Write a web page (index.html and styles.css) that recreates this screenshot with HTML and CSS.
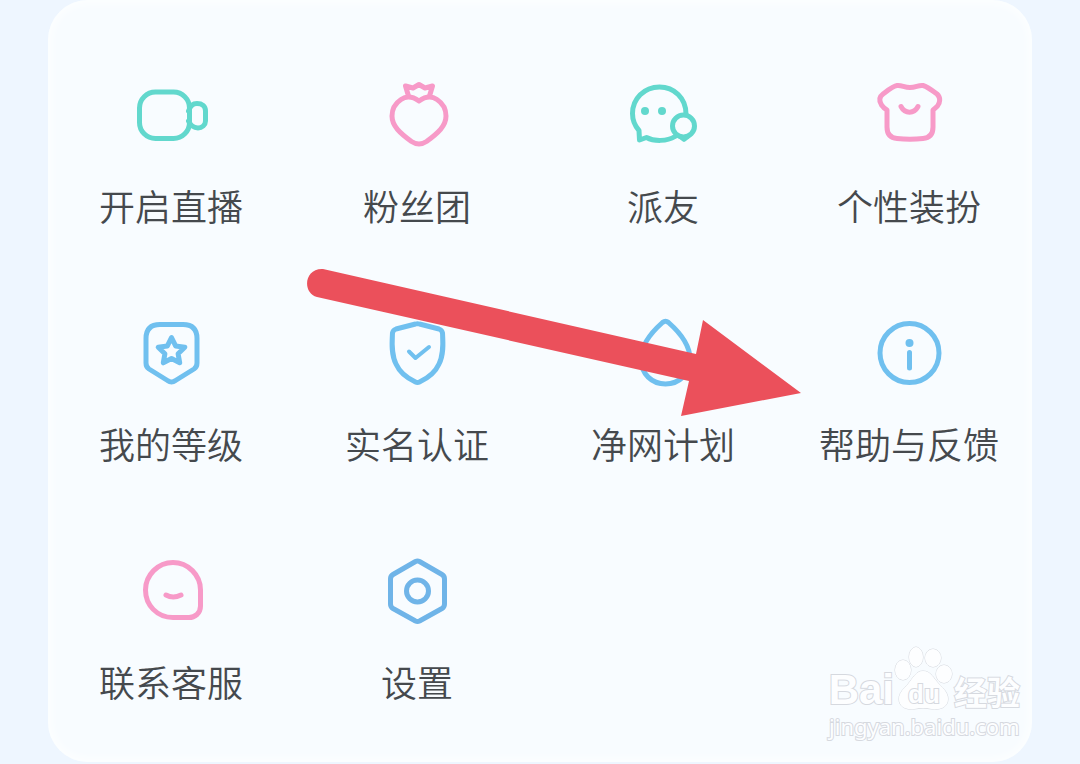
FILE: index.html
```html
<!DOCTYPE html>
<html lang="zh-CN">

<head>
    <meta charset="UTF-8">
    <meta name="viewport" content="width=device-width, initial-scale=1.0">
    <title>更多服务</title>
    <link rel="stylesheet" href="styles.css">
</head>

<body>
    <main class="panel">
        <nav class="menu">
            <a class="item green" href="#">
                <svg class="icon" viewBox="0 0 80 80" aria-hidden="true">
                    <rect x="8.500" y="18" width="50" height="46.500" rx="16" />
                    <path d="M57.500 37C59 32 62 29.500 66 29.500C71 29.500 74.500 32 74.500 37V47C74.500 51 71 54 67 54C63 54 59 51 57.500 47" />
                </svg>
                <span>开启直播</span>
            </a>
            <a class="item pink" href="#">
                <svg class="icon" viewBox="0 0 80 80" aria-hidden="true">
                    <path d="M42 27C35 22 29 22 24 25.500C18 29.500 15 35 15 42C15 52 23 59 34.500 67.500Q42 72.500 49.500 67.500C61 59 69 52 69 42C69 35 66 29.500 60 25.500C55 22 49 22 42 27Z" />
                    <path d="M31.500 22L28.500 12L36 14L42 10.500L48 14L55.500 12L52.500 22" />
                </svg>
                <span>粉丝团</span>
            </a>
            <a class="item green" href="#">
                <svg class="icon" viewBox="0 0 80 80" aria-hidden="true">
                    <path d="M63 40C63 24 51 13 36.500 13C21 13 9.500 25 9.500 39.500C9.500 46 12 52 16 56.500L16.500 66L23.500 63.500C31 67.500 44 67.500 52 62.500" />
                    <circle cx="60.500" cy="52" r="11" />
                    <path class="thin" d="M57 63L61 66L65 63" />
                    <circle class="dot" cx="22" cy="37" r="4" />
                    <circle class="dot" cx="39" cy="37" r="4" />
                </svg>
                <span>派友</span>
            </a>
            <a class="item pink" href="#">
                <svg class="icon" viewBox="0 0 80 80" aria-hidden="true">
                    <path d="M28 11.500C33 11 35 13.500 41 13.500C47 13.500 49 11 54 11.500C58 12.500 64 17 68 20C72 23.500 71 29 68.500 32Q66 34.500 64 36V53C64 60 61 64 54 64.500Q41 66 28 64.500C21 64 18 60 18 53V36Q15 34.500 12.500 31C10 27 10 23 14 20C18 17 24 12 28 11.500Z" />
                    <path d="M32 32.500C36 40 45 40 49 32.500" />
                </svg>
                <span>个性装扮</span>
            </a>
            <a class="item blue" href="#">
                <svg class="icon" viewBox="0 0 80 80" aria-hidden="true">
                    <path d="M29 12.500H52Q66 12.500 66 26.500V51Q66 55 63 57L44.500 68.500Q40.500 71.500 36.500 68.500L18 57Q15 55 15 51V26.500Q15 12.500 29 12.500Z" />
                    <path d="M40.500 25.500L44.600 33.900L53.800 35.200L47.100 41.700L48.700 50.800L40.500 46.500L32.300 50.800L33.900 41.700L27.200 35.200L36.400 33.900Z" />
                </svg>
                <span>我的等级</span>
            </a>
            <a class="item blue" href="#">
                <svg class="icon" viewBox="0 0 80 80" aria-hidden="true">
                    <path d="M38.500 12Q40.500 11.300 42.500 12L62 17Q65 18 65.500 21C66 30 67 42 62 52C58 61 49 67 42.500 70Q40.500 71 38.500 70C32 67 23 61 19 52C14 42 15 30 15.500 21Q16 18 19 17Z" />
                    <path class="thin" d="M32 39.500L38.500 46L52 35" />
                </svg>
                <span>实名认证</span>
            </a>
            <a class="item blue" href="#">
                <svg class="icon" viewBox="0 0 80 80" aria-hidden="true">
                    <path d="M39.500 10.500Q42.500 8 45.500 10.500C54 18 67 32 67 47C67 62 56 72 42.500 72C29 72 18 62 18 47C18 32 31 18 39.500 10.500Z" />
                </svg>
                <span>净网计划</span>
            </a>
            <a class="item blue" href="#">
                <svg class="icon" viewBox="0 0 80 80" aria-hidden="true">
                    <circle cx="40.500" cy="41" r="29.500" />
                    <circle class="dot" cx="40.500" cy="31" r="4" />
                    <path d="M40.500 40.500V56" />
                </svg>
                <span>帮助与反馈</span>
            </a>
            <a class="item pink" href="#">
                <svg class="icon" viewBox="0 0 80 80" aria-hidden="true">
                    <path d="M42 12.500C57 12.500 69.500 25 69.500 40V56Q69.500 61 66 64.500Q62.500 67.500 58 67.500H42C26 67.500 14.500 55 14.500 40C14.500 25 27 12.500 42 12.500Z" />
                    <path d="M35 45Q42 49 50 45" />
                </svg>
                <span>联系客服</span>
            </a>
            <a class="item deep" href="#">
                <svg class="icon" viewBox="0 0 80 80" aria-hidden="true">
                    <path d="M38.500 11.500Q40.500 10.500 42.500 11.500L65 24.500Q67.500 26 67.500 29V54Q67.500 57 65 58.500L42.500 71Q40.500 72 38.500 71L16 58.500Q13.500 57 13.500 54V29Q13.500 26 16 24.500Z" />
                    <circle cx="40.500" cy="41" r="11" />
                </svg>
                <span>设置</span>
            </a>
        </nav>

        <!-- 指向“帮助与反馈”的箭头 -->
        <svg class="arrow" viewBox="0 0 496 148" aria-hidden="true">
            <path d="M18 1L391 86L398 52L496 125L376 148L384 113L12 29C-3 25 -1 0 18 1Z" />
        </svg>

        <!-- 水印 -->
        <div class="watermark">
            <div class="brand">
                <span class="bai">Bai</span>
                <span class="paw">
                    <svg viewBox="0 0 60 64" aria-hidden="true">
                        <ellipse cx="9" cy="24" rx="8" ry="10" />
                        <ellipse cx="22" cy="11" rx="7" ry="10" />
                        <ellipse cx="39" cy="12" rx="8" ry="9" />
                        <ellipse cx="50" cy="28" rx="8" ry="9" />
                        <path d="M29 25C37 25 40 33 45 38C50 43 54 47 54 53C54 62 45 64 38 63Q29 61 20 63C12 64 5 61 5 53C5 46 10 43 14 38C19 32 22 25 29 25Z" />
                    </svg>
                    <span class="du">du</span>
                </span>
                <span class="exp">经验</span>
            </div>
            <div class="site">jingyan.baidu.com</div>
        </div>
    </main>
</body>

</html>
```
FILE: styles.css
```css
* {
    margin: 0;
    padding: 0;
    box-sizing: border-box;
}

body {
    min-height: 100vh;
    padding: 0 48px;
    background-color: #eef6ff;
    font-family: "Noto Sans CJK SC", sans-serif;
}

/* 面板 */
.panel {
    position: relative;
    padding: 74px 0 54px;
    border-radius: 40px;
    background-color: #f8fcff;
    box-shadow: inset 0 0 6px 4px #fcfeff;
}

.menu {
    display: grid;
    grid-template-columns: repeat(4, 1fr);
    row-gap: 80px;
}

.item {
    display: flex;
    flex-direction: column;
    align-items: center;
    gap: 24px;
    color: #45494d;
    font-size: 36px;
    font-weight: 350;
    line-height: 54px;
    white-space: nowrap;
    text-decoration: none;
}

/* 图标 */
.icon {
    width: 80px;
    height: 80px;
    fill: none;
    stroke: var(--color);
    stroke-width: 5px;
    stroke-linecap: round;
    stroke-linejoin: round;
}

.icon .thin {
    stroke-width: 4px;
}

.icon .dot {
    fill: var(--color);
    stroke: none;
}

.green {
    --color: #62d8cd;
}

.pink {
    --color: #f79ac8;
}

.blue {
    --color: #70c0ef;
}

.deep {
    --color: #6fb4e8;
}

/* 箭头盖在图标上面 */
.arrow {
    position: absolute;
    top: 268px;
    left: 257px;
    width: 496px;
    height: 148px;
    fill: #eb505b;
    pointer-events: none;
}

/* 水印 */
.watermark {
    position: absolute;
    right: 12px;
    bottom: 20px;
    color: #fdfeff;
    -webkit-text-stroke: 2px #d6d9df;
    paint-order: stroke fill;
    pointer-events: none;
}

.brand {
    display: flex;
    align-items: flex-end;
    height: 64px;
}

.bai {
    font: bold 42px/40px "Liberation Sans", sans-serif;
}

.paw {
    position: relative;
    width: 60px;
    height: 64px;
}

.paw svg {
    width: 60px;
    height: 64px;
    fill: #fdfeff;
    stroke: #d6d9df;
    stroke-width: 1px;
}

.du {
    position: absolute;
    left: 0;
    bottom: 2px;
    width: 60px;
    text-align: center;
    font: bold 26px/28px "Liberation Sans", sans-serif;
}

.exp {
    font-size: 33px;
    font-weight: bold;
    line-height: 38px;
}

.site {
    text-align: center;
    font: 22px/32px "Noto Sans", sans-serif;
}
```
